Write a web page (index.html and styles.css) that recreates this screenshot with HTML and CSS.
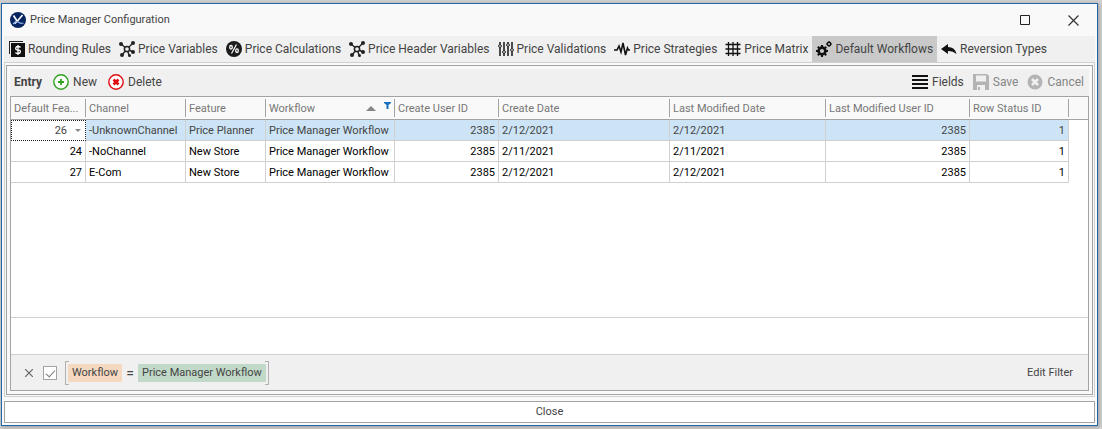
FILE: index.html
```html
<!DOCTYPE html>
<html lang="en">
<head>
<meta charset="utf-8">
<title>Price Manager Configuration</title>
<link rel="stylesheet" href="styles.css">
</head>
<body>
<svg class="defs" width="0" height="0" aria-hidden="true">
  <symbol id="nodes" viewBox="0 0 16 16"><path d="M2 3 8 8M14 2 8 8M14 11 8 8M3 14 8 8M10 14 8 8" stroke="#222" stroke-width="1.4" fill="none"/><circle cx="8" cy="8" r="2.6" fill="#f0f0f0" stroke="#222" stroke-width="1.5"/><g fill="#222"><circle cx="2" cy="3" r="2"/><circle cx="14" cy="2" r="2"/><circle cx="14" cy="11" r="2"/><circle cx="3" cy="14" r="2"/><circle cx="10.500" cy="14.500" r="1.500"/></g></symbol>
</svg>
<main class="window">
  <header class="title-bar">
    <svg class="icon" viewBox="0 0 16 16"><circle cx="8" cy="8" r="8" fill="#06245f"/><path d="M3.500 3.500 7 9M12.500 3 7.500 9 4.500 11.500" stroke="#fff" stroke-width="1.700" fill="none"/><path d="M3 12q4-4 6-1.500 2 1.500 4.500.5" stroke="#8fb4ec" stroke-width="1.200" fill="none"/></svg>
    <h1 class="title">Price Manager Configuration</h1>
    <button class="window-button" aria-label="Maximize"><svg width="10" height="10"><path d="M.5.5h9v9h-9z" fill="none" stroke="#222"/></svg></button>
    <button class="window-button" aria-label="Close window"><svg width="11" height="11"><path d="m.5.5 10 10m0-10-10 10" fill="none" stroke="#333" stroke-width="1.200"/></svg></button>
  </header>
  <nav class="tabs">
    <button class="tab"><svg class="icon" viewBox="0 0 16 16"><path d="M0 13V0h14v1H1v12z" fill="#222"/><path d="M2 2h14v14H2z" fill="#111"/><path d="M11.500 6.500Q11 5.500 9 5.500T6.700 7.200 9 9 11.400 10.800 9 12.500 6.500 11.500M9 4v10" stroke="#fff" stroke-width="1.300" fill="none"/></svg>Rounding Rules</button>
    <button class="tab"><svg class="icon"><use href="#nodes"/></svg>Price Variables</button>
    <button class="tab"><svg class="icon" viewBox="0 0 16 16"><circle cx="8" cy="8" r="8" fill="#1c1c1c"/><path d="m10.500 3.500-5 9" stroke="#fff" stroke-width="1.200"/><g fill="none" stroke="#fff" stroke-width="1.300"><ellipse cx="5" cy="6.300" rx="1.300" ry="1.800"/><ellipse cx="11" cy="9.700" rx="1.300" ry="1.800"/></g></svg>Price Calculations</button>
    <button class="tab"><svg class="icon"><use href="#nodes"/></svg>Price Header Variables</button>
    <button class="tab"><svg class="icon" viewBox="0 0 16 16"><path d="M2 1v14M6 1v14M10 1v14M14 1v14" stroke="#222" stroke-width="1.600"/><g fill="#f0f0f0" stroke="#222"><circle cx="2" cy="5" r="1.400"/><circle cx="6" cy="11" r="1.400"/><circle cx="10" cy="4" r="1.400"/><circle cx="14" cy="9" r="1.400"/></g></svg>Price Validations</button>
    <button class="tab"><svg class="icon" viewBox="0 0 16 16"><path d="M0 9h3l2-4 2 6 2-9 2.500 12L13.500 7l1 2H16" stroke="#111" stroke-width="1.600" fill="none"/></svg>Price Strategies</button>
    <button class="tab"><svg class="icon" viewBox="0 0 16 16"><path d="M3.500 1v14M8 1v14M12.500 1v14M.5 3.500h15M.5 8h15M.5 12.500h15" stroke="#111" stroke-width="1.300"/></svg>Price Matrix</button>
    <button class="tab tab-active"><svg class="icon" viewBox="0 0 16 16"><circle cx="6" cy="10" r="3.400" fill="none" stroke="#111" stroke-width="2.600"/><path d="M6 4v2M6 14v2M0 10h2M10 10h2M1.800 5.800l1.400 1.400M8.800 12.800l1.400 1.400M1.800 14.200l1.400-1.400M8.800 7.200l1.400-1.400" stroke="#111" stroke-width="2"/><circle cx="13" cy="3" r="1.700" fill="none" stroke="#111" stroke-width="1.400"/><path d="M13 0v1M13 5v1M10 3h1M15 3h1M11 1l.7.7M14.300 4.300 15 5M11 5l.7-.7M14.300 1.700 15 1" stroke="#111"/></svg>Default Workflows</button>
    <button class="tab"><svg class="icon" viewBox="0 0 16 16"><path d="M0 8 7 3v3q7 0 8.500 7Q12 9.800 7 10v3z" fill="#111"/></svg>Reversion Types</button>
  </nav>
  <section class="frame">
    <div class="panel">
      <div class="toolbar">
        <strong class="caption">Entry</strong>
        <button class="tool"><svg class="icon" viewBox="0 0 16 16"><circle cx="8" cy="8" r="7.200" fill="#fff" stroke="#2fa11f" stroke-width="1.400"/><path d="M8 5v6M5 8h6" stroke="#2fa11f" stroke-width="1.800"/></svg>New</button>
        <button class="tool"><svg class="icon" viewBox="0 0 16 16"><circle cx="8" cy="8" r="7.200" fill="#fff" stroke="#e00c12" stroke-width="1.400"/><path d="m5.500 5.500 5 5m0-5-5 5" stroke="#e00c12" stroke-width="2.600"/></svg>Delete</button>
        <div class="tools-end">
        <button class="tool"><svg class="icon" viewBox="0 0 16 16"><path d="M0 2h16M0 14h16" stroke="#111" stroke-width="2"/><path d="M0 6h16M0 10h16" stroke="#111" stroke-width="2"/></svg>Fields</button>
        <button class="tool" disabled><svg class="icon" viewBox="0 0 16 16"><path d="M0 0h14l2 2v14H0z" fill="#b4b4b4"/><path d="M3 1.500h10v6H3zM4 11h8v5H7v-3H5v3H4z" fill="#f0f0f0"/></svg>Save</button>
        <button class="tool" disabled><svg class="icon" viewBox="0 0 16 16"><circle cx="8" cy="8" r="7.500" fill="#b4b4b4"/><path d="m5 5 6 6m0-6-6 6" stroke="#f0f0f0" stroke-width="2.600"/></svg>Cancel</button>
        </div>
      </div>
      <div class="grid">
        <div class="grid-head"></div>
        <table class="table">
          <colgroup><col class="w-id"><col class="w-channel"><col class="w-feature"><col class="w-workflow"><col class="w-user"><col class="w-created"><col class="w-modified"><col class="w-modifier"><col class="w-status"></colgroup>
          <thead><tr><th>Default Fea...</th><th>Channel</th><th>Feature</th><th><span class="sorted">Workflow<svg width="26" height="14"><path d="M0 9h10L5 4z" fill="#858585"/><path d="M18 0h7v1l-2.500 2v4h-2V3L18 1z" fill="#1670bd"/></svg></span></th><th>Create User ID</th><th>Create Date</th><th>Last Modified Date</th><th>Last Modified User ID</th><th>Row Status ID</th></tr></thead>
          <tbody>
            <tr class="selected"><td class="num focused">26<svg class="drop" width="6" height="3"><path d="M0 0h6L3 3z" fill="#888"/></svg></td><td>-UnknownChannel</td><td>Price Planner</td><td>Price Manager Workflow</td><td class="num">2385</td><td>2/12/2021</td><td>2/12/2021</td><td class="num">2385</td><td class="num">1</td></tr>
            <tr><td class="num">24</td><td>-NoChannel</td><td>New Store</td><td>Price Manager Workflow</td><td class="num">2385</td><td>2/11/2021</td><td>2/11/2021</td><td class="num">2385</td><td class="num">1</td></tr>
            <tr><td class="num">27</td><td>E-Com</td><td>New Store</td><td>Price Manager Workflow</td><td class="num">2385</td><td>2/12/2021</td><td>2/12/2021</td><td class="num">2385</td><td class="num">1</td></tr>
          </tbody>
        </table>
        <div class="summary"></div>
        <footer class="filter">
          <button class="clear" aria-label="Clear filter"><svg width="8" height="8"><path d="m0 0 8 8m0-8-8 8" stroke="#666" stroke-width="1.200"/></svg></button>
          <input class="check" type="checkbox" checked aria-label="Enable filter">
          <div class="group"><span class="chip field">Workflow</span><span class="equals">=</span><span class="chip value">Price Manager Workflow</span></div>
          <span class="spacer"></span>
          <button class="edit">Edit Filter</button>
        </footer>
      </div>
    </div>
  </section>
  <button class="close">Close</button>
</main>
</body>
</html>
```
FILE: styles.css
```css
* { box-sizing: border-box; }
body { margin: 0; height: 100vh; padding: 3px 4px 3px 1px; background: #d0d0d0; font: 11px/14px Roboto, sans-serif; color: #444; }
button { margin: 0; padding: 0; border: 0; background: none; font: inherit; color: inherit; }
svg { flex: none; }
.defs { position: absolute; }
.window { height: 100%; display: flex; flex-direction: column; border: 1px solid #1f67a8; background: #f9f9f9; padding: 0 2px 2px; box-shadow: 1px 1px 4px #999; }
.icon { width: 16px; height: 16px; }
.title-bar { flex: none; height: 32px; display: flex; align-items: center; padding-left: 6px; gap: 4px; }
.title { flex: 1; margin: 0; font-size: 11px; font-weight: 400; }
.window-button { width: 44px; height: 30px; display: flex; align-items: center; justify-content: center; }
.tabs { flex: none; height: 26px; display: flex; padding-left: 1px; background: #f0f0f0; font-size: 12px; white-space: nowrap; }
.tab { display: flex; align-items: center; gap: 3px; padding: 0 4px; }
.tab-active { background: #c9c9c9; }
.frame { flex: 1; min-height: 0; border: 1px solid #d0d0d0; padding: 2px 1px 1px; display: flex; }
.panel { flex: 1; min-width: 0; border: 1px solid #a3a3a3; padding: 3px; display: flex; flex-direction: column; }
.toolbar { flex: none; height: 27px; display: flex; align-items: center; gap: 11px; padding: 0 5px 2px 4px; background: #f0f0f0; font-size: 12px; }
.caption { font-weight: 700; }
.tool { display: flex; align-items: center; gap: 4px; }
.tool:disabled { color: #858585; }
.tools-end { margin-left: auto; display: flex; gap: 9px; }
.spacer { flex: 1; }
.grid { flex: 1; min-height: 0; position: relative; display: flex; flex-direction: column; border: 1px solid #a3a3a3; background: #fff; }
.grid-head { position: absolute; top: 0; left: 0; right: 0; height: 23px; border-bottom: 1px solid #a3a3a3; background: #f9f9f9; }
.table { position: relative; width: 1058px; table-layout: fixed; border-spacing: 0; white-space: nowrap; }
.w-id { width: 75px; } .w-channel { width: 100px; } .w-feature { width: 80px; } .w-workflow { width: 129px; } .w-user { width: 104px; }
.w-created { width: 171px; } .w-modified { width: 156px; } .w-modifier { width: 144px; } .w-status { width: 99px; }
th { height: 23px; padding: 1px 3px 0; border-bottom: 1px solid #a3a3a3; background: linear-gradient(#a3a3a3, #a3a3a3) right 2px / 1px 18px no-repeat; text-align: left; font-weight: 400; color: #777; }
td { height: 21px; padding: 2px 3px 0; border: solid #d0d0d0; border-width: 0 1px 1px 0; color: #000; }
.num { text-align: right; }
.sorted { display: flex; justify-content: space-between; }
.selected td { background: #cce4f6; color: #444; }
.selected .focused { padding-top: 0; background: #fff; border: 1px dotted #222; }
.drop { margin: 0 1px 2px 8px; }
.summary { flex: none; height: 38px; margin-top: auto; border: solid #d0d0d0; border-width: 1px 0; }
.filter { flex: none; height: 35px; display: flex; align-items: center; padding: 0 15px 0 14px; background: #f0f0f0; }
.clear { display: flex; }
.check { appearance: none; width: 14px; height: 14px; margin: 0 8px 0 10px; border: 1px solid #a3a3a3; background: #fff; display: grid; place-items: center; }
.check:checked::after { content: ""; width: 4px; height: 8px; border: solid #777; border-width: 0 1px 1px 0; transform: rotate(42deg); }
.group { height: 24px; display: flex; align-items: center; padding: 0 2px; border: 1px solid #b0b0b0; border-width: 0 1px; background: linear-gradient(#b0b0b0, #b0b0b0) 0 0 / 3px 1px no-repeat, linear-gradient(#b0b0b0, #b0b0b0) 100% 0 / 3px 1px no-repeat, linear-gradient(#b0b0b0, #b0b0b0) 0 100% / 3px 1px no-repeat, linear-gradient(#b0b0b0, #b0b0b0) 100% 100% / 3px 1px no-repeat; }
.chip { padding: 2px 4px; border-radius: 1px; }
.field { background: #f4d9c0; }
.value { background: #c1d9c8; }
.equals { width: 16px; font-size: 14px; text-align: center; }
.close { flex: none; height: 22px; margin-top: 4px; border: 1px solid #a3a3a3; background: #fff; }
```
